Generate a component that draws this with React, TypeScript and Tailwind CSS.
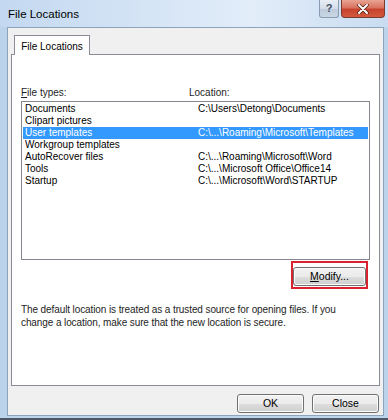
import React from 'react'

const rows = [
  { name: 'Documents', path: 'C:\\Users\\Detong\\Documents' },
  { name: 'Clipart pictures', path: '' },
  { name: 'User templates', path: 'C:\\...\\Roaming\\Microsoft\\Templates', selected: true },
  { name: 'Workgroup templates', path: '' },
  { name: 'AutoRecover files', path: 'C:\\...\\Roaming\\Microsoft\\Word' },
  { name: 'Tools', path: 'C:\\...\\Microsoft Office\\Office14' },
  { name: 'Startup', path: 'C:\\...\\Microsoft\\Word\\STARTUP' },
]

function WinButton({ children, className = '' }: { children: React.ReactNode; className?: string }) {
  return (
    <button
      type="button"
      className={`h-[19px] rounded-[3px] border border-[#707070] bg-[linear-gradient(to_bottom,#f2f2f2_0%,#ebebeb_50%,#dddddd_51%,#cfcfcf_100%)] text-[10.5px] leading-none text-black shadow-[inset_0_0_0_1px_#fcfcfc] ${className}`}
    >
      {children}
    </button>
  )
}

export default function App() {
  return (
    <div
      className="relative flex h-[420px] w-[388px] flex-col overflow-hidden bg-[#bcd3ec] text-black"
      style={{ fontFamily: '"Liberation Sans", Arial, sans-serif' }}
    >
      {/* title bar */}
      <div className="relative flex h-[27px] items-center bg-[linear-gradient(to_right,#c3d8f0_0%,#d6e5f6_40%,#e2edf9_65%,#c9dcf1_100%)] pl-[8px] pt-[2px]">
        <span className="text-[11.5px] text-black">File Locations</span>
        <div className="absolute right-[3px] top-0 flex gap-[2px]">
          <div className="flex h-[18px] w-[20px] items-center justify-center rounded-b-[3px] border border-t-0 border-[#8b9bb0] bg-[linear-gradient(to_bottom,#e9eef5_0%,#d3dce8_50%,#bccadb_51%,#c9d6e5_100%)] text-[11px] font-bold text-[#3f4f66]">
            ?
          </div>
          <div className="flex h-[18px] w-[44px] items-center justify-center rounded-b-[4px] border border-t-0 border-[#7a3a30] bg-[linear-gradient(to_bottom,#e8a493_0%,#d8735e_45%,#c7432e_55%,#d25a3e_100%)]">
            <svg width="12" height="10" viewBox="0 0 12 10">
              <path d="M2 1 L10 9 M10 1 L2 9" stroke="#4a1a12" strokeWidth="3.4" strokeLinecap="round" />
              <path d="M2 1 L10 9 M10 1 L2 9" stroke="#ffffff" strokeWidth="2" strokeLinecap="round" />
            </svg>
          </div>
        </div>
      </div>

      {/* client area */}
      <div className="ml-[7px] mr-[4px] flex flex-1 flex-col border border-[#8da2bb] bg-[#f0f0f0] pt-[7px]">
        {/* tab strip */}
        <div className="flex pl-[6px]">
          <div className="relative z-10 -mb-px flex h-[20px] w-[76px] items-center justify-center border border-b-0 border-[#898c95] bg-white pt-[1px] text-[10px]">
            File Locations
          </div>
        </div>

        {/* tab panel */}
        <div className="ml-[3px] flex h-[332px] w-[369px] flex-col border border-[#898c95] bg-white px-[9px] pt-[30px]">
          <div className="flex h-[14px] items-center text-[10px] text-[#1e1e1e]">
            <span className="w-[168px]">
              <span className="underline underline-offset-1">F</span>ile types:
            </span>
            <span>Location:</span>
          </div>
          <div className="mt-[2px] h-[159px] border border-[#828790] bg-white px-[1px] pt-[1px]">
            {rows.map((r) => (
              <div
                key={r.name}
                className={`flex h-[12px] items-center text-[10px] leading-none ${
                  r.selected ? 'bg-[#3399ff] text-white' : 'text-black'
                }`}
              >
                <span className="w-[175px] pl-[2px]">{r.name}</span>
                <span>{r.path}</span>
              </div>
            ))}
          </div>
          <div className="mt-[1px] flex justify-end pr-[2px]">
            <div className="border-2 border-[#d9232e] p-0">
              <WinButton className="w-[73px]">
                <span className="underline underline-offset-1">M</span>odify...
              </WinButton>
            </div>
          </div>
          <p className="mt-[14px] max-w-[340px] text-[10px] leading-[13px] tracking-[-0.1px] text-[#1e1e1e]">
            The default location is treated as a trusted source for opening files. If you change a location, make
            sure that the new location is secure.
          </p>
        </div>

        {/* footer buttons */}
        <div className="mt-[8px] flex justify-end gap-[8px] pr-[4px]">
          <WinButton className="w-[67px]">OK</WinButton>
          <WinButton className="w-[67px]">Close</WinButton>
        </div>
      </div>
      <div className="h-[2px]" />
      <div className="h-[2px] bg-[#4d5662]" />
    </div>
  )
}
